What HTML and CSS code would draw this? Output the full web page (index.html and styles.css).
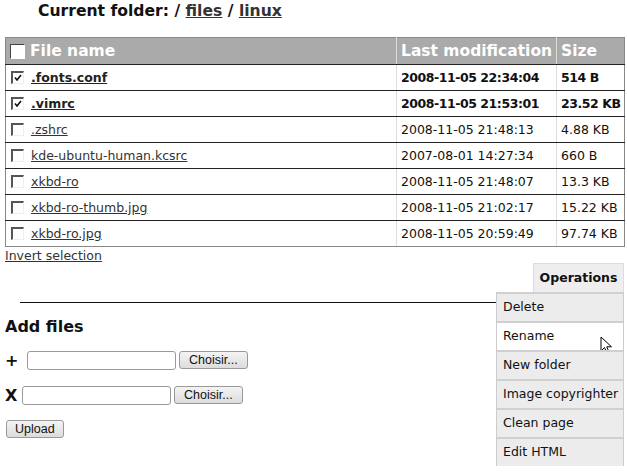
FILE: index.html
```html
<!DOCTYPE html>
<html>
<head>
<meta charset="utf-8">
<link rel="stylesheet" href="styles.css">
</head>
<body>
<h1 class="title">Current folder: / <a href="#">files</a> / <a href="#">linux</a></h1>
<table class="files">
  <colgroup>
    <col class="w-name">
    <col class="w-date">
    <col class="w-size">
  </colgroup>
  <thead>
    <tr>
      <th class="c-name"><span class="cb cb-head"></span>File name</th>
      <th class="c-date">Last modification</th>
      <th class="c-size">Size</th>
    </tr>
  </thead>
  <tbody>
    <tr class="sel">
      <td class="c-name"><span class="cb"><svg viewBox="0 0 12 12" width="12" height="12"><path d="M3 5.5 L5 8 L9 3" fill="none" stroke="#111" stroke-width="1.6"/></svg></span><a href="#">.fonts.conf</a></td>
      <td class="c-date">2008-11-05 22:34:04</td>
      <td class="c-size">514 B</td>
    </tr>
    <tr class="sel">
      <td class="c-name"><span class="cb"><svg viewBox="0 0 12 12" width="12" height="12"><path d="M3 5.5 L5 8 L9 3" fill="none" stroke="#111" stroke-width="1.6"/></svg></span><a href="#">.vimrc</a></td>
      <td class="c-date">2008-11-05 21:53:01</td>
      <td class="c-size">23.52 KB</td>
    </tr>
    <tr>
      <td class="c-name"><span class="cb"></span><a href="#">.zshrc</a></td>
      <td class="c-date">2008-11-05 21:48:13</td>
      <td class="c-size">4.88 KB</td>
    </tr>
    <tr>
      <td class="c-name"><span class="cb"></span><a href="#">kde-ubuntu-human.kcsrc</a></td>
      <td class="c-date">2007-08-01 14:27:34</td>
      <td class="c-size">660 B</td>
    </tr>
    <tr>
      <td class="c-name"><span class="cb"></span><a href="#">xkbd-ro</a></td>
      <td class="c-date">2008-11-05 21:48:07</td>
      <td class="c-size">13.3 KB</td>
    </tr>
    <tr>
      <td class="c-name"><span class="cb"></span><a href="#">xkbd-ro-thumb.jpg</a></td>
      <td class="c-date">2008-11-05 21:02:17</td>
      <td class="c-size">15.22 KB</td>
    </tr>
    <tr>
      <td class="c-name"><span class="cb"></span><a href="#">xkbd-ro.jpg</a></td>
      <td class="c-date">2008-11-05 20:59:49</td>
      <td class="c-size">97.74 KB</td>
    </tr>
  </tbody>
</table>
<a class="invert" href="#">Invert selection</a>

<div class="ops">
  <div class="ops-tab">Operations</div>
  <ul class="ops-menu">
    <li>Delete</li>
    <li class="hover">Rename<svg class="cursor" viewBox="0 0 12 19" width="12" height="19"><path d="M1 1 L1 15 L4.5 11.5 L7 17.5 L9.2 16.5 L6.8 10.8 L11.5 10.8 Z" fill="#fff" stroke="#000" stroke-width="1" stroke-linejoin="round"/></svg></li>
    <li>New folder</li>
    <li>Image copyrighter</li>
    <li>Clean page</li>
    <li>Edit HTML</li>
  </ul>
</div>

<hr class="sep">

<h2 class="add-title">Add files</h2>
<div class="upload-row">
  <span class="mark">+</span>
  <span class="file-input"></span>
  <button class="btn" type="button">Choisir...</button>
</div>
<div class="upload-row row-x">
  <span class="mark">X</span>
  <span class="file-input"></span>
  <button class="btn" type="button">Choisir...</button>
</div>
<div class="upload-submit">
  <button class="btn btn-upload" type="button">Upload</button>
</div>
</body>
</html>
```

FILE: styles.css
```css
html, body {
  margin: 0;
  padding: 0;
  background: #fff;
}
body {
  font-family: "DejaVu Sans", Verdana, sans-serif;
  font-size: 13px;
  color: #111;
  padding: 0 3px 0 5px;
  position: relative;
  min-height: 473px;
  box-sizing: border-box;
}
a {
  color: #333;
}
.title {
  font-size: 15.6px;
  font-weight: bold;
  margin: 0;
  padding: 2px 0 0 33px;
  height: 37px;
  box-sizing: border-box;
  line-height: 19px;
  color: #111;
}
.title a {
  color: #333;
}
.files {
  border-collapse: collapse;
  table-layout: fixed;
  width: 619px;
  border: 1px solid #888;
}
.w-name { width: 391px; }
.w-date { width: 160px; }
.w-size { width: 68px; }
.files th {
  background: #aaa;
  color: #fff;
  font-size: 15.5px;
  font-weight: bold;
  text-align: left;
  height: 26px;
  padding: 0 4px;
  border-left: 1px solid #ddd;
  border-bottom: 1px solid #222;
  white-space: nowrap;
  overflow: hidden;
}
.files td {
  height: 25px;
  padding: 0 4px;
  border-left: 1px solid #ddd;
  border-bottom: 1px solid #222;
  white-space: nowrap;
  font-size: 12.5px;
  overflow: hidden;
}
.files tbody tr:last-child td {
  border-bottom: 1px solid #888;
}
.files th.c-name, .files td.c-name {
  border-left: 1px solid #888;
}
.sel td {
  font-weight: bold;
  letter-spacing: -0.45px;
}
.sel td a {
  color: #222;
  letter-spacing: 0;
}
.cb {
  display: inline-block;
  vertical-align: -2px;
  width: 10px;
  height: 10px;
  border-top: 2px solid #555;
  border-left: 2px solid #555;
  border-right: 1px solid #eee;
  border-bottom: 1px solid #eee;
  background: #fff;
  margin: 0 7px 0 1px;
  position: relative;
}
.cb svg {
  position: absolute;
  left: -1px;
  top: -1px;
}
.cb-head {
  width: 13px;
  height: 13px;
  border: 1px solid #fff;
  border-top-color: #444;
  border-left-color: #444;
  margin: 0 5px 0 0;
  vertical-align: -3px;
}
.invert {
  display: block;
  font-size: 12.5px;
  line-height: 15px;
  margin-top: 1px;
  color: #333;
}
.ops {
  position: absolute;
  right: 3px;
  top: 263px;
  width: 128px;
  display: flex;
  flex-direction: column;
  align-items: flex-end;
}
.ops-tab {
  width: 91px;
  height: 29px;
  box-sizing: border-box;
  background: #eee;
  border: 1px solid #ddd;
  border-bottom: none;
  font-weight: bold;
  font-size: 12.5px;
  line-height: 28px;
  text-align: center;
  color: #111;
}
.ops-menu {
  list-style: none;
  margin: 0;
  padding: 0;
  width: 128px;
  box-sizing: border-box;
  border-left: 1px solid #ccc;
  border-right: 1px solid #ccc;
}
.ops-menu li {
  height: 29px;
  box-sizing: border-box;
  background: #ececec;
  border-top: 2px solid #d0d0d0;
  padding-left: 6px;
  line-height: 26px;
  font-size: 12.5px;
  color: #111;
  white-space: nowrap;
  position: relative;
}
.ops-menu li.hover {
  background: #fff;
}
.cursor {
  position: absolute;
  left: 103px;
  top: 13px;
}
.sep {
  width: 95%;
  margin: 39px auto 0;
  border: none;
  border-top: 1px solid #111;
  height: 0;
}
.add-title {
  font-size: 16px;
  font-weight: bold;
  margin: 14px 0 0;
  line-height: 20px;
  color: #111;
}
.upload-row {
  display: flex;
  align-items: center;
  margin-top: 13px;
  height: 20px;
}
.row-x {
  margin-top: 15px;
}
.mark {
  font-weight: bold;
  font-size: 16px;
  width: 22px;
}
.row-x .mark {
  width: 17px;
}
.file-input {
  display: inline-block;
  width: 147px;
  height: 17px;
  border: 1px solid #999;
  border-radius: 3px;
  background: #fff;
}
.btn {
  font-family: "Liberation Sans", Arial, sans-serif;
  font-size: 12.5px;
  color: #111;
  height: 18px;
  padding: 0 9px;
  margin-left: 3px;
  border: 1px solid #999;
  border-radius: 3px;
  background: linear-gradient(#f4f4f4, #dcdcdc);
  line-height: 15px;
}
.upload-submit {
  margin-top: 15px;
}
.btn-upload {
  margin-left: 1px;
  padding: 0 8px;
}
```
